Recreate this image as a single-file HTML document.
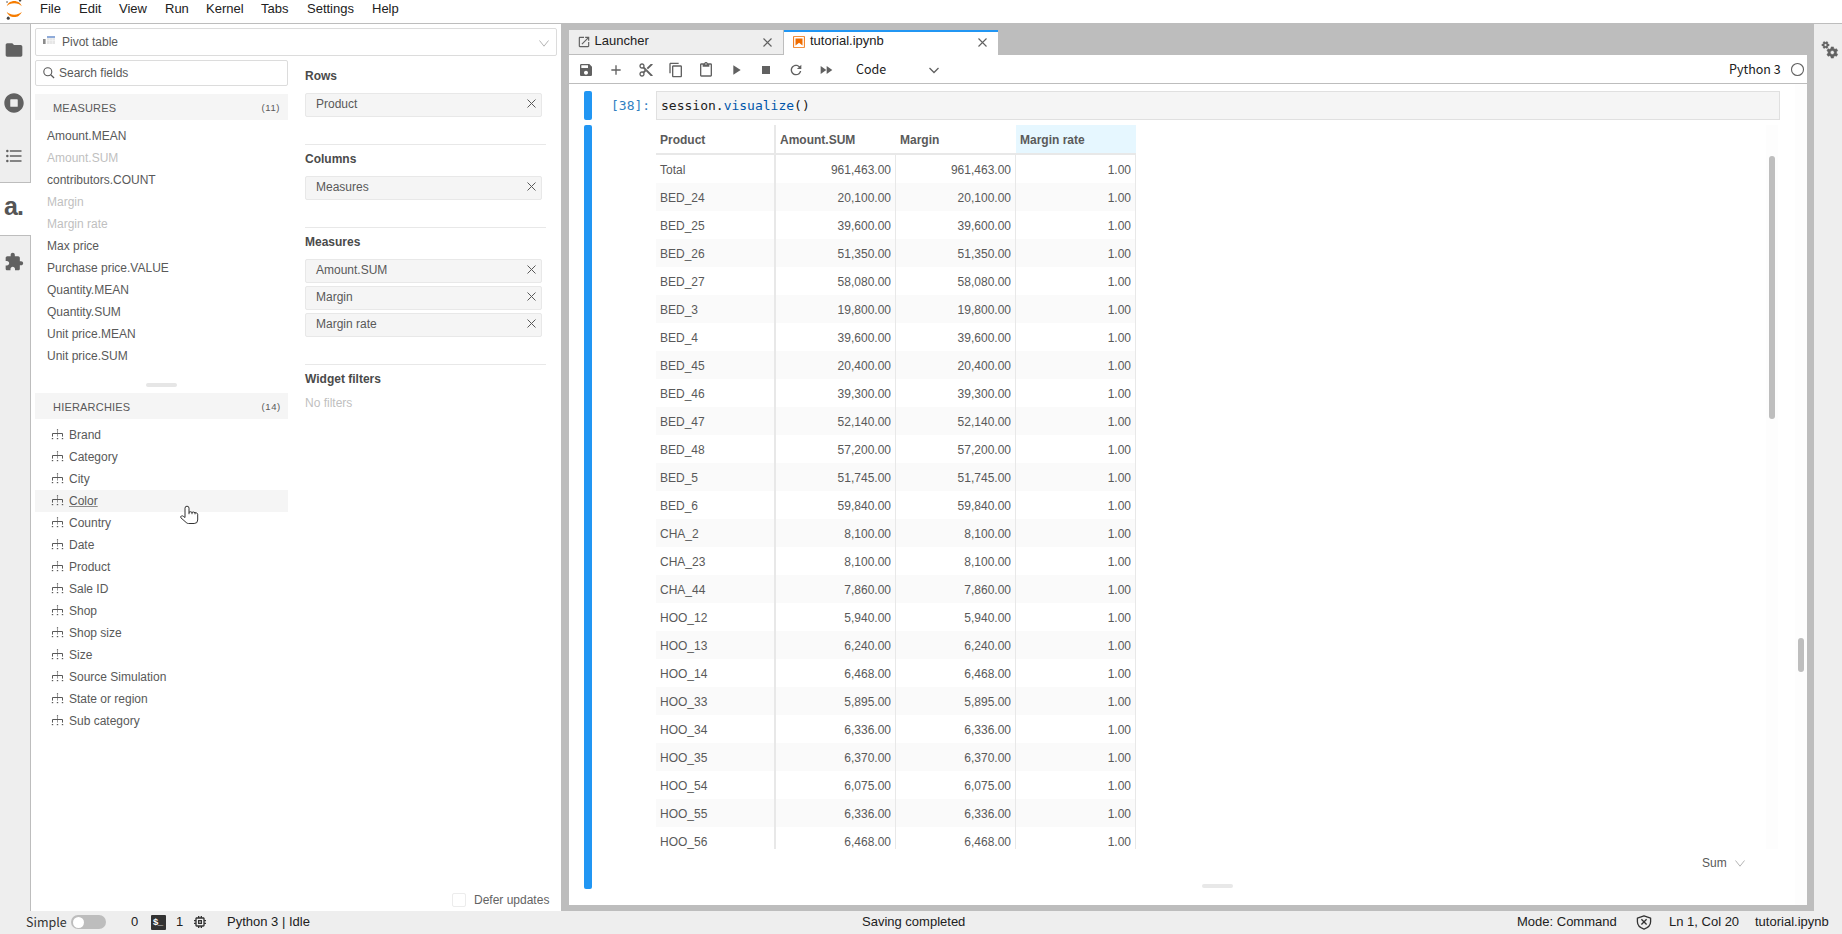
<!DOCTYPE html>
<html><head><meta charset="utf-8"><title>JupyterLab</title>
<style>
*{box-sizing:border-box;margin:0;padding:0}
html,body{width:1842px;height:934px;overflow:hidden;background:#fff}
body{font-family:"Liberation Sans",sans-serif;font-size:13px;color:#212121;position:relative}
.abs,.abs *{position:absolute}
.t{position:absolute;white-space:nowrap;line-height:16px;height:16px}
#top{left:0;top:0;width:1842px;height:24px;background:#fff;border-bottom:1px solid #bdbdbd}
#lside{left:0;top:24px;width:31px;height:887px;background:#eee;border-right:1px solid #bdbdbd}
#lactive{left:0;top:182px;width:31px;height:54px;background:#fff;border-top:1px solid #bdbdbd;border-bottom:1px solid #bdbdbd}
#lpanel{left:31px;top:24px;width:530px;height:887px;background:#fff}
#dock{left:561px;top:24px;width:1253px;height:887px;background:#bdbdbd}
#rside{left:1814px;top:24px;width:28px;height:887px;background:#eee}
#status{left:0;top:911px;width:1842px;height:23px;background:#eee}

.box{position:absolute;border:1px solid #dcdcdc;border-radius:2px;background:#fff}
.g{color:#595959;font-size:12px}
.dis{color:#bfbfbf}
.hdr{position:absolute;left:35px;width:253px;height:26px;background:#f5f5f5}
.hdr .t{font-size:11px;color:#595959;top:6px}
.hi{position:absolute;left:51.300px;width:13px;height:11px}
.chip{position:absolute;left:305px;width:237px;height:24px;border:1px solid #e8e8e8;border-radius:2px;background:#f5f5f5}
.chip .t{left:10px;top:2px;font-size:12px;color:#595959}
.chip svg{position:absolute;left:220.500px;top:5px;width:9px;height:9px}
.lbl{font-weight:bold;font-size:12px;color:#4a4a4a}
.hr{position:absolute;left:305px;width:241px;height:1px;background:#e8e8e8}

.ti{position:absolute;top:62px;width:16px;height:16px}
.ti path{fill:#616161}
.dj{font-family:"Noto Sans CJK SC","DejaVu Sans",sans-serif;font-size:12.500px}
.mono{font-family:"DejaVu Sans Mono","Liberation Mono",monospace}

.th{position:absolute;top:125px;height:28px;width:120px;font-weight:bold;font-size:12px;color:#5a5a5a;line-height:30px;padding-left:4px;white-space:nowrap}
.row{position:absolute;left:656px;width:480px;height:28px;font-size:12px;color:#595959;line-height:27px;white-space:nowrap}
.row.z{background:#fafafa}
.row span{position:absolute;top:1px;height:28px;line-height:28px}
.row .a{left:4px}
.row .b{left:120px;width:115px;text-align:right}
.row .c{left:240px;width:115px;text-align:right}
.row .d{left:360px;width:115px;text-align:right}
.vl{position:absolute;width:1px;background:#e8e8e8}
/* --- section styles are appended below --- */
</style></head><body>
<div id="top" class="abs"></div>
<div id="lside" class="abs"></div>
<div id="lactive" class="abs"></div>
<div id="lpanel" class="abs"></div>
<div id="dock" class="abs"></div>
<div id="rside" class="abs"></div>
<div id="status" class="abs"></div>
<div id="menu">
<svg class="t" style="left:6px;top:-1px;width:16px;height:21px;overflow:visible" viewBox="0 0 39 51"><g transform="translate(-1638 -2281)"><g fill="#f57c00"><path transform="translate(1639.740 2311.980)" d="M 18.265 7.134C 10.415 7.134 3.559 4.258 0 0C 1.325 3.820 3.796 7.131 7.069 9.473C 10.342 11.816 14.256 13.075 18.269 13.075C 22.282 13.075 26.196 11.816 29.469 9.473C 32.742 7.131 35.213 3.820 36.538 0C 32.971 4.258 26.115 7.134 18.265 7.134Z"/><path transform="translate(1639.730 2285.480)" d="M 18.273 5.939C 26.123 5.939 32.979 8.816 36.538 13.073C 35.213 9.253 32.742 5.943 29.469 3.600C 26.196 1.258 22.282 0 18.269 0C 14.256 0 10.342 1.258 7.069 3.600C 3.796 5.943 1.325 9.253 0 13.073C 3.567 8.825 10.423 5.939 18.273 5.939Z"/></g><circle cx="1672.250" cy="2284.270" r="2.950" fill="#4e4e4e"/><circle cx="1643.510" cy="2327.540" r="3.720" fill="#424242"/><circle cx="1640.550" cy="2288.250" r="2.190" fill="#8a8a8a"/></g></svg>
<span class="t" style="left:40px;top:1px">File</span>
<span class="t" style="left:79px;top:1px">Edit</span>
<span class="t" style="left:119px;top:1px">View</span>
<span class="t" style="left:165px;top:1px">Run</span>
<span class="t" style="left:206px;top:1px">Kernel</span>
<span class="t" style="left:261px;top:1px">Tabs</span>
<span class="t" style="left:307px;top:1px">Settings</span>
<span class="t" style="left:372px;top:1px">Help</span>
</div>
<div id="lsideicons">
<svg class="t" style="left:4.300px;top:39.800px;width:20px;height:20px" viewBox="0 0 24 24"><path fill="#616161" d="M10 4H4c-1.100 0-1.990.9-1.990 2L2 18c0 1.100.9 2 2 2h16c1.100 0 2-.9 2-2V8c0-1.100-.9-2-2-2h-8l-2-2z"/></svg>
<svg class="t" style="left:4.100px;top:92.800px;width:20px;height:20px" viewBox="0 0 512 512"><path fill="#616161" d="M256 8C119 8 8 119 8 256s111 248 248 248 248-111 248-248S393 8 256 8zm96 328c0 8.800-7.200 16-16 16H176c-8.800 0-16-7.200-16-16V176c0-8.800 7.200-16 16-16h160c8.800 0 16 7.200 16 16v160z"/></svg>
<svg class="t" style="left:3.700px;top:146px;width:20px;height:20px" viewBox="0 0 24 24"><path fill="#616161" d="M7,5H21V7H7V5M7,13V11H21V13H7M4,4.500A1.500,1.500 0 0,1 5.500,6A1.500,1.500 0 0,1 4,7.500A1.500,1.500 0 0,1 2.500,6A1.500,1.500 0 0,1 4,4.500M4,10.500A1.500,1.500 0 0,1 5.500,12A1.500,1.500 0 0,1 4,13.500A1.500,1.500 0 0,1 2.500,12A1.500,1.500 0 0,1 4,10.500M7,19V17H21V19H7M4,16.500A1.500,1.500 0 0,1 5.500,18A1.500,1.500 0 0,1 4,19.500A1.500,1.500 0 0,1 2.500,18A1.500,1.500 0 0,1 4,16.500Z"/></svg>
<svg class="t" style="left:4px;top:252.400px;width:20px;height:20px" viewBox="0 0 24 24"><path fill="#616161" d="M20.500 11H19V7c0-1.100-.9-2-2-2h-4V3.500C13 2.120 11.880 1 10.500 1S8 2.120 8 3.500V5H4c-1.100 0-1.990.9-1.990 2v3.800H3.500c1.490 0 2.700 1.210 2.700 2.700s-1.210 2.700-2.700 2.700H2V20c0 1.100.9 2 2 2h3.800v-1.500c0-1.490 1.210-2.700 2.700-2.700 1.490 0 2.700 1.210 2.700 2.700V22H17c1.100 0 2-.9 2-2v-4h1.500c1.380 0 2.500-1.120 2.500-2.500S21.880 11 20.500 11z"/></svg>
<span class="t" style="left:4px;top:191px;font-weight:bold;font-size:25px;line-height:30px;height:30px;color:#555;letter-spacing:-1px">a.</span>
</div>
<div id="fields">
<div class="box" style="left:35px;top:28px;width:522px;height:28px"></div>
<svg class="t" style="left:43px;top:35px;width:13px;height:10px" viewBox="0 0 13 10"><rect x="0" y="4" width="2.600" height="5" fill="#8c8c8c"/><rect x="4" y="1" width="8" height="2.200" fill="#8fabd9"/><rect x="4" y="3.200" width="8" height="5.800" fill="#e6e6e6"/><path d="M4 5.600h8M6.700 3.200v5.800M9.300 3.200v5.800" stroke="#f6f6f6" stroke-width=".7"/></svg>
<span class="t g" style="left:62px;top:34px">Pivot table</span>
<svg class="t" style="left:539px;top:39.500px;width:10px;height:7px;overflow:visible" viewBox="0 0 10 7"><path d="M.5.500l4.500 5.700 4.500-5.700" fill="none" stroke="#b5b5b5" stroke-width="1"/></svg>
<div class="box" style="left:35px;top:60px;width:253px;height:26px"></div>
<svg class="t" style="left:42px;top:66px;width:14px;height:14px;overflow:visible" viewBox="0 0 14 14"><circle cx="5.800" cy="5.700" r="4" fill="none" stroke="#595959" stroke-width="1.100"/><path d="M8.700 8.700l3.400 3.300" stroke="#595959" stroke-width="1.200"/></svg>
<span class="t g" style="left:59px;top:65px">Search fields</span>
<div class="hdr" style="top:94px"><span class="t" style="left:18px;letter-spacing:.2px">MEASURES</span><span class="t" style="left:226.500px;top:6px;letter-spacing:.6px;font-size:9.500px">(11)</span></div>
<span class="t g" style="left:47px;top:128px">Amount.MEAN</span>
<span class="t g dis" style="left:47px;top:150px">Amount.SUM</span>
<span class="t g" style="left:47px;top:172px">contributors.COUNT</span>
<span class="t g dis" style="left:47px;top:194px">Margin</span>
<span class="t g dis" style="left:47px;top:216px">Margin rate</span>
<span class="t g" style="left:47px;top:238px">Max price</span>
<span class="t g" style="left:47px;top:260px">Purchase price.VALUE</span>
<span class="t g" style="left:47px;top:282px">Quantity.MEAN</span>
<span class="t g" style="left:47px;top:304px">Quantity.SUM</span>
<span class="t g" style="left:47px;top:326px">Unit price.MEAN</span>
<span class="t g" style="left:47px;top:348px">Unit price.SUM</span>

<div class="t" style="left:146px;top:383px;width:31px;height:4px;border-radius:2px;background:#e6e6e6"></div>
<div class="hdr" style="top:393px"><span class="t" style="left:18px;letter-spacing:.2px">HIERARCHIES</span><span class="t" style="left:226.500px;top:6px;letter-spacing:.6px;font-size:9.500px">(14)</span></div>
<div class="t" style="left:35px;top:490px;width:253px;height:22px;background:#f5f5f5"></div>
<svg width="0" height="0" style="position:absolute"><defs><g id="hic"><path d="M1.500 7.600V4.500h10V7.600" fill="none" stroke="#595959" stroke-width="1"/><path d="M6.500 1.800V7.600" fill="none" stroke="#595959" stroke-width="1" opacity=".6"/><rect x="5.900" y="0.200" width="1.200" height="1.300" fill="#595959"/><rect x="0.800" y="9" width="1.400" height="1.200" fill="#595959"/><rect x="5.800" y="9" width="1.400" height="1.200" fill="#595959"/><rect x="10.800" y="9" width="1.400" height="1.200" fill="#595959"/></g></defs></svg>
<svg class="hi" style="top:429px" viewBox="0 0 13 11"><use href="#hic"/></svg><span class="t g" style="left:69px;top:427px">Brand</span>
<svg class="hi" style="top:451px" viewBox="0 0 13 11"><use href="#hic"/></svg><span class="t g" style="left:69px;top:449px">Category</span>
<svg class="hi" style="top:473px" viewBox="0 0 13 11"><use href="#hic"/></svg><span class="t g" style="left:69px;top:471px">City</span>
<svg class="hi" style="top:495px" viewBox="0 0 13 11"><use href="#hic"/></svg><span class="t g" style="left:69px;top:493px;text-decoration:underline;text-decoration-color:#8c8c8c">Color</span>
<svg class="hi" style="top:517px" viewBox="0 0 13 11"><use href="#hic"/></svg><span class="t g" style="left:69px;top:515px">Country</span>
<svg class="hi" style="top:539px" viewBox="0 0 13 11"><use href="#hic"/></svg><span class="t g" style="left:69px;top:537px">Date</span>
<svg class="hi" style="top:561px" viewBox="0 0 13 11"><use href="#hic"/></svg><span class="t g" style="left:69px;top:559px">Product</span>
<svg class="hi" style="top:583px" viewBox="0 0 13 11"><use href="#hic"/></svg><span class="t g" style="left:69px;top:581px">Sale ID</span>
<svg class="hi" style="top:605px" viewBox="0 0 13 11"><use href="#hic"/></svg><span class="t g" style="left:69px;top:603px">Shop</span>
<svg class="hi" style="top:627px" viewBox="0 0 13 11"><use href="#hic"/></svg><span class="t g" style="left:69px;top:625px">Shop size</span>
<svg class="hi" style="top:649px" viewBox="0 0 13 11"><use href="#hic"/></svg><span class="t g" style="left:69px;top:647px">Size</span>
<svg class="hi" style="top:671px" viewBox="0 0 13 11"><use href="#hic"/></svg><span class="t g" style="left:69px;top:669px">Source Simulation</span>
<svg class="hi" style="top:693px" viewBox="0 0 13 11"><use href="#hic"/></svg><span class="t g" style="left:69px;top:691px">State or region</span>
<svg class="hi" style="top:715px" viewBox="0 0 13 11"><use href="#hic"/></svg><span class="t g" style="left:69px;top:713px">Sub category</span>

</div>
<div id="config">
<span class="t lbl" style="left:305px;top:68px">Rows</span>
<div class="chip" style="top:93px"><span class="t">Product</span><svg viewBox="0 0 9 9"><path d="M.5.500l8 8M8.500.500l-8 8" stroke="#595959" stroke-width="1" fill="none"/></svg></div>
<div class="hr" style="top:144px"></div>
<span class="t lbl" style="left:305px;top:151px">Columns</span>
<div class="chip" style="top:176px"><span class="t">Measures</span><svg viewBox="0 0 9 9"><path d="M.5.500l8 8M8.500.500l-8 8" stroke="#595959" stroke-width="1" fill="none"/></svg></div>
<div class="hr" style="top:227px"></div>
<span class="t lbl" style="left:305px;top:234px">Measures</span>
<div class="chip" style="top:259px"><span class="t">Amount.SUM</span><svg viewBox="0 0 9 9"><path d="M.5.500l8 8M8.500.500l-8 8" stroke="#595959" stroke-width="1" fill="none"/></svg></div>
<div class="chip" style="top:286px"><span class="t">Margin</span><svg viewBox="0 0 9 9"><path d="M.5.500l8 8M8.500.500l-8 8" stroke="#595959" stroke-width="1" fill="none"/></svg></div>
<div class="chip" style="top:313px"><span class="t">Margin rate</span><svg viewBox="0 0 9 9"><path d="M.5.500l8 8M8.500.500l-8 8" stroke="#595959" stroke-width="1" fill="none"/></svg></div>
<div class="hr" style="top:364px"></div>
<span class="t lbl" style="left:305px;top:371px">Widget filters</span>
<span class="t g dis" style="left:305px;top:395px">No filters</span>
<div class="box" style="left:451.500px;top:892.500px;width:14px;height:14px;border-color:#ececec"></div><span class="t g" style="left:474px;top:892px;color:#636363">Defer updates</span>
</div>
<div id="tabs">
<div class="t" style="left:569px;top:30px;width:1238px;height:875px;background:#fff"></div>
<div class="t" style="left:569px;top:30px;width:1238px;height:25px;background:#bdbdbd"></div>
<div class="t" style="left:569px;top:30px;width:215px;height:24px;background:#eee;border-right:1px solid #bdbdbd"></div>
<div class="t" style="left:784px;top:30px;width:214px;height:25px;background:#fff;border-top:2px solid #2196f3"></div>
<svg class="t" style="left:577.250px;top:35px;width:14px;height:14px" viewBox="0 0 24 24"><path fill="#616161" d="M19 19H5V5h7V3H5c-1.110 0-2 .9-2 2v14c0 1.100.89 2 2 2h14c1.100 0 2-.9 2-2v-7h-2v7zM14 3v2h3.590l-9.830 9.830 1.410 1.410L19 6.410V10h2V3h-7z"/></svg>
<span class="t" style="left:594.500px;top:33px">Launcher</span>
<svg class="t" style="left:762.500px;top:38px;width:9px;height:9px;overflow:visible" viewBox="0 0 9 9"><path d="M.5.500l8 8M8.500.500l-8 8" stroke="#616161" stroke-width="1.100" fill="none"/></svg>
<svg class="t" style="left:791.850px;top:35px;width:14px;height:14px" viewBox="0 0 22 22"><path fill="#ef6c00" d="M18.700 3.300v15.400H3.300V3.300h15.400m1.500-1.500H1.800v18.300h18.300l.1-18.300z"/><path fill="#ef6c00" d="M16.500 16.500l-5.400-4.300-5.600 4.300v-11h11z"/></svg>
<span class="t" style="left:810px;top:33px">tutorial.ipynb</span>
<svg class="t" style="left:977.500px;top:38px;width:9px;height:9px;overflow:visible" viewBox="0 0 9 9"><path d="M.5.500l8 8M8.500.500l-8 8" stroke="#616161" stroke-width="1.100" fill="none"/></svg>
<div class="t" style="left:569px;top:55px;width:1238px;height:29px;background:#fff;border-bottom:1px solid #bdbdbd"></div>
<svg class="ti" style="left:578px" viewBox="0 0 24 24"><path d="M17 3H5c-1.110 0-2 .9-2 2v14c0 1.100.89 2 2 2h14c1.100 0 2-.9 2-2V7l-4-4zm-5 16c-1.660 0-3-1.340-3-3s1.340-3 3-3 3 1.340 3 3-1.340 3-3 3zm3-10H5V5h10v4z"/></svg>
<svg class="ti" style="left:608px" viewBox="0 0 24 24"><path d="M19 13h-6v6h-2v-6H5v-2h6V5h2v6h6v2z"/></svg>
<svg class="ti" style="left:638px" viewBox="0 0 24 24"><path d="M9.640 7.640c.23-.5.360-1.050.360-1.640 0-2.210-1.790-4-4-4S2 3.790 2 6s1.790 4 4 4c.59 0 1.140-.13 1.640-.36L10 12l-2.360 2.360C7.140 14.130 6.590 14 6 14c-2.210 0-4 1.790-4 4s1.790 4 4 4 4-1.790 4-4c0-.59-.13-1.140-.36-1.640L12 14l7 7h3v-1L9.640 7.640zM6 8c-1.100 0-2-.89-2-2s.9-2 2-2 2 .89 2 2-.9 2-2 2zm0 12c-1.100 0-2-.89-2-2s.9-2 2-2 2 .89 2 2-.9 2-2 2zm6-7.500c-.28 0-.5-.22-.5-.5s.22-.5.500-.5.500.22.500.5-.22.500-.5.500zM19 3l-6 6 2 2 7-7V3z"/></svg>
<svg class="ti" style="left:668px" viewBox="0 0 24 24"><path d="M16 1H4c-1.100 0-2 .9-2 2v14h2V3h12V1zm3 4H8c-1.100 0-2 .9-2 2v14c0 1.100.9 2 2 2h11c1.100 0 2-.9 2-2V7c0-1.100-.9-2-2-2zm0 16H8V7h11v14z"/></svg>
<svg class="ti" style="left:698px" viewBox="0 0 24 24"><path d="M19 2h-4.180C14.400.840 13.300 0 12 0c-1.300 0-2.400.84-2.820 2H5c-1.100 0-2 .9-2 2v16c0 1.100.9 2 2 2h14c1.100 0 2-.9 2-2V4c0-1.100-.9-2-2-2zm-7 0c.55 0 1 .45 1 1s-.45 1-1 1-1-.45-1-1 .45-1 1-1zm7 18H5V4h2v3h10V4h2v16z"/></svg>
<svg class="ti" style="left:728px" viewBox="0 0 24 24"><path d="M8 5v14l11-7z"/></svg>
<svg class="ti" style="left:758px" viewBox="0 0 24 24"><path d="M6 6h12v12H6z"/></svg>
<svg class="ti" style="left:788px" viewBox="0 0 18 18"><path d="M9 13.500c-2.490 0-4.500-2.010-4.500-4.500S6.510 4.500 9 4.500c1.240 0 2.360.52 3.170 1.330L10 8h5V3l-1.760 1.760C12.150 3.680 10.660 3 9 3 5.690 3 3.010 5.690 3.010 9S5.690 15 9 15c2.970 0 5.430-2.160 5.900-5h-1.520c-.46 2-2.240 3.500-4.380 3.500z"/></svg>
<svg class="ti" style="left:818px" viewBox="0 0 24 24"><path d="M4 18l8.500-6L4 6v12zm9-12v12l8.500-6L13 6z"/></svg>

<span class="t dj" style="left:856px;top:61px">Code</span>
<svg class="t" style="left:928px;top:65.500px;width:12px;height:9px" viewBox="0 0 12 9"><path d="M1.500 2l4.500 4.500L10.500 2" fill="none" stroke="#616161" stroke-width="1.300"/></svg>
<span class="t dj" style="left:1729px;top:61px">Python 3</span>
<svg class="t" style="left:1789.500px;top:61.700px;width:15px;height:15px" viewBox="0 0 15 15"><circle cx="7.500" cy="7.500" r="6" fill="none" stroke="#616161" stroke-width="1.100"/></svg>
<svg class="t" style="left:1818px;top:38px;width:24px;height:24px" viewBox="0 0 24 24"><path fill="#616161" fill-rule="evenodd" stroke="#616161" stroke-width=".5" stroke-linejoin="round" d="M12.86 10.55L13.11 8.92L15.49 8.92L15.74 10.55L17.00 11.28L18.54 10.69L19.72 12.74L18.44 13.77L18.44 15.23L19.72 16.26L18.54 18.31L17.00 17.72L15.74 18.45L15.49 20.08L13.11 20.08L12.86 18.45L11.60 17.72L10.06 18.31L8.88 16.26L10.16 15.23L10.16 13.77L8.88 12.74L10.06 10.69L11.60 11.28ZM12.30 14.50a2.00 2.00 0 1 0 4.00 0a2.00 2.00 0 1 0 -4.00 0Z"/><path fill="#616161" fill-rule="evenodd" stroke="#616161" stroke-width=".4" stroke-linejoin="round" d="M7.97 4.34L8.64 3.48L9.98 4.25L9.57 5.26L10.04 6.08L11.12 6.23L11.12 7.77L10.04 7.92L9.57 8.74L9.98 9.75L8.64 10.52L7.97 9.66L7.03 9.66L6.36 10.52L5.02 9.75L5.43 8.74L4.96 7.92L3.88 7.77L3.88 6.23L4.96 6.08L5.43 5.26L5.02 4.25L6.36 3.48L7.03 4.34ZM6.20 7.00a1.30 1.30 0 1 0 2.60 0a1.30 1.30 0 1 0 -2.60 0Z"/></svg>
</div>
<div id="nb">
<div class="t" style="left:584px;top:91px;width:8px;height:29px;background:#2196f3;border-radius:2px"></div>
<div class="t" style="left:584px;top:125px;width:8px;height:764px;background:#2196f3;border-radius:2px"></div>
<span class="t mono" style="left:611px;top:98px;color:#307fc1;font-size:13px">[38]:</span>
<div class="t" style="left:656px;top:91px;width:1124px;height:29px;background:#f5f5f5;border:1px solid #e0e0e0"></div>
<span class="t mono" style="left:661px;top:98px;font-size:13px;color:#212121">session.<span style="color:#0055aa">visualize</span>()</span>
<div class="t" style="left:1766px;top:125px;width:12px;height:724px;background:#fdfdfd"></div>
<div class="t" style="left:1795px;top:84px;width:12px;height:821px;background:#fdfdfd"></div>
<div class="t" style="left:1769px;top:156px;width:6px;height:263px;border-radius:3px;background:#bebebe"></div>
<div class="t" style="left:1798px;top:638px;width:6px;height:34px;border-radius:3px;background:#bebebe"></div>
<span class="t g" style="left:1702px;top:855px">Sum</span>
<svg class="t" style="left:1735px;top:860px;width:10px;height:7px;overflow:visible" viewBox="0 0 10 7"><path d="M.5.500l4.500 5.700 4.500-5.700" fill="none" stroke="#b5b5b5" stroke-width="1"/></svg>
<div class="t" style="left:1202px;top:884px;width:31px;height:4px;border-radius:2px;background:#e8e8e8"></div>
</div>
<div id="tbl" class="t" style="left:0;top:0;width:1842px;height:849px;overflow:hidden">
<div class="th" style="left:1016px;background:#e6f7ff"></div>
<div class="th" style="left:656px">Product</div>
<div class="th" style="left:776px">Amount.SUM</div>
<div class="th" style="left:896px">Margin</div>
<div class="th" style="left:1016px">Margin rate</div>
<div class="t" style="left:656px;top:153px;width:480px;height:2px;background:#e8e8e8"></div>
<div class="row" style="top:155px"><span class="a">Total</span><span class="b">961,463.00</span><span class="c">961,463.00</span><span class="d">1.00</span></div>
<div class="row z" style="top:183px"><span class="a">BED_24</span><span class="b">20,100.00</span><span class="c">20,100.00</span><span class="d">1.00</span></div>
<div class="row" style="top:211px"><span class="a">BED_25</span><span class="b">39,600.00</span><span class="c">39,600.00</span><span class="d">1.00</span></div>
<div class="row z" style="top:239px"><span class="a">BED_26</span><span class="b">51,350.00</span><span class="c">51,350.00</span><span class="d">1.00</span></div>
<div class="row" style="top:267px"><span class="a">BED_27</span><span class="b">58,080.00</span><span class="c">58,080.00</span><span class="d">1.00</span></div>
<div class="row z" style="top:295px"><span class="a">BED_3</span><span class="b">19,800.00</span><span class="c">19,800.00</span><span class="d">1.00</span></div>
<div class="row" style="top:323px"><span class="a">BED_4</span><span class="b">39,600.00</span><span class="c">39,600.00</span><span class="d">1.00</span></div>
<div class="row z" style="top:351px"><span class="a">BED_45</span><span class="b">20,400.00</span><span class="c">20,400.00</span><span class="d">1.00</span></div>
<div class="row" style="top:379px"><span class="a">BED_46</span><span class="b">39,300.00</span><span class="c">39,300.00</span><span class="d">1.00</span></div>
<div class="row z" style="top:407px"><span class="a">BED_47</span><span class="b">52,140.00</span><span class="c">52,140.00</span><span class="d">1.00</span></div>
<div class="row" style="top:435px"><span class="a">BED_48</span><span class="b">57,200.00</span><span class="c">57,200.00</span><span class="d">1.00</span></div>
<div class="row z" style="top:463px"><span class="a">BED_5</span><span class="b">51,745.00</span><span class="c">51,745.00</span><span class="d">1.00</span></div>
<div class="row" style="top:491px"><span class="a">BED_6</span><span class="b">59,840.00</span><span class="c">59,840.00</span><span class="d">1.00</span></div>
<div class="row z" style="top:519px"><span class="a">CHA_2</span><span class="b">8,100.00</span><span class="c">8,100.00</span><span class="d">1.00</span></div>
<div class="row" style="top:547px"><span class="a">CHA_23</span><span class="b">8,100.00</span><span class="c">8,100.00</span><span class="d">1.00</span></div>
<div class="row z" style="top:575px"><span class="a">CHA_44</span><span class="b">7,860.00</span><span class="c">7,860.00</span><span class="d">1.00</span></div>
<div class="row" style="top:603px"><span class="a">HOO_12</span><span class="b">5,940.00</span><span class="c">5,940.00</span><span class="d">1.00</span></div>
<div class="row z" style="top:631px"><span class="a">HOO_13</span><span class="b">6,240.00</span><span class="c">6,240.00</span><span class="d">1.00</span></div>
<div class="row" style="top:659px"><span class="a">HOO_14</span><span class="b">6,468.00</span><span class="c">6,468.00</span><span class="d">1.00</span></div>
<div class="row z" style="top:687px"><span class="a">HOO_33</span><span class="b">5,895.00</span><span class="c">5,895.00</span><span class="d">1.00</span></div>
<div class="row" style="top:715px"><span class="a">HOO_34</span><span class="b">6,336.00</span><span class="c">6,336.00</span><span class="d">1.00</span></div>
<div class="row z" style="top:743px"><span class="a">HOO_35</span><span class="b">6,370.00</span><span class="c">6,370.00</span><span class="d">1.00</span></div>
<div class="row" style="top:771px"><span class="a">HOO_54</span><span class="b">6,075.00</span><span class="c">6,075.00</span><span class="d">1.00</span></div>
<div class="row z" style="top:799px"><span class="a">HOO_55</span><span class="b">6,336.00</span><span class="c">6,336.00</span><span class="d">1.00</span></div>
<div class="row" style="top:827px"><span class="a">HOO_56</span><span class="b">6,468.00</span><span class="c">6,468.00</span><span class="d">1.00</span></div>
<div class="vl" style="left:774px;top:125px;height:730px;width:2px"></div>
<div class="vl" style="left:895px;top:155px;height:700px"></div>
<div class="vl" style="left:1015px;top:155px;height:700px"></div>
<div class="vl" style="left:1135px;top:155px;height:700px"></div>
</div>
<div id="statusitems">
<span class="t dj" style="left:26px;top:914px;font-size:12.500px;color:#333">Simple</span>
<div class="t" style="left:71px;top:915px;width:35px;height:14px;border-radius:7px;background:#bdbdbd"></div>
<div class="t" style="left:73px;top:916.500px;width:11px;height:11px;border-radius:6px;background:#fff"></div>
<span class="t" style="left:131px;top:914px">0</span>
<div class="t" style="left:151px;top:915px;width:15px;height:15px;background:#333;border-radius:1px"></div>
<span class="t" style="left:153px;top:917px;font-size:9.500px;font-weight:bold;color:#fff;line-height:10px;height:10px;letter-spacing:-.5px">$_</span>
<span class="t" style="left:176px;top:914px">1</span>
<svg class="t" style="left:192px;top:914px;width:16px;height:16px" viewBox="0 0 24 24"><path fill="#333" d="M15 9H9v6h6V9zm-2 4h-2v-2h2v2zm8-2V9h-2V7c0-1.100-.9-2-2-2h-2V3h-2v2h-2V3H9v2H7c-1.100 0-2 .9-2 2v2H3v2h2v2H3v2h2v2c0 1.100.9 2 2 2h2v2h2v-2h2v2h2v-2h2c1.100 0 2-.9 2-2v-2h2v-2h-2v-2h2zm-4 6H7V7h10v10z"/></svg>
<span class="t" style="left:227px;top:914px">Python 3 | Idle</span>
<span class="t" style="left:862px;top:914px">Saving completed</span>
<span class="t" style="left:1517px;top:914px">Mode: Command</span>
<svg class="t" style="left:1636px;top:915px;width:16px;height:15px" viewBox="0 0 16 15"><path fill="none" stroke="#333" stroke-width="1.300" stroke-linejoin="round" d="M8 .8L14.600 3.100V6.800c0 3.400-2.700 6-6.600 7.300C4.100 12.800 1.400 10.200 1.400 6.800V3.100z"/><path d="M5.400 4.300l5.200 5.200M10.600 4.300l-5.200 5.200" stroke="#333" stroke-width="1.300"/></svg>
<span class="t" style="left:1669px;top:914px">Ln 1, Col 20</span>
<span class="t" style="left:1755px;top:914px">tutorial.ipynb</span>
</div>
<svg class="t" style="left:180px;top:506px;width:19px;height:19px;overflow:visible" viewBox="0 0 19 19"><path d="M5 11.500V2.200a2 2 0 0 1 4 0V6.200q1.500-1 3 .2q1.500-.9 3 .3q1.900-.5 2.700 1.500V14q0 3.500-3.500 3.500H8.500q-1.300 0-2.300-1L.9 11.800q-.8-1 .4-1.800q1.100-.5 2 .3z" fill="#fff" stroke="#333" stroke-width="1" stroke-linejoin="round"/><path d="M9 6v2.200M12 6.400v1.800M15 6.700v1.600" stroke="#333" stroke-width="1"/></svg>
</body></html>
